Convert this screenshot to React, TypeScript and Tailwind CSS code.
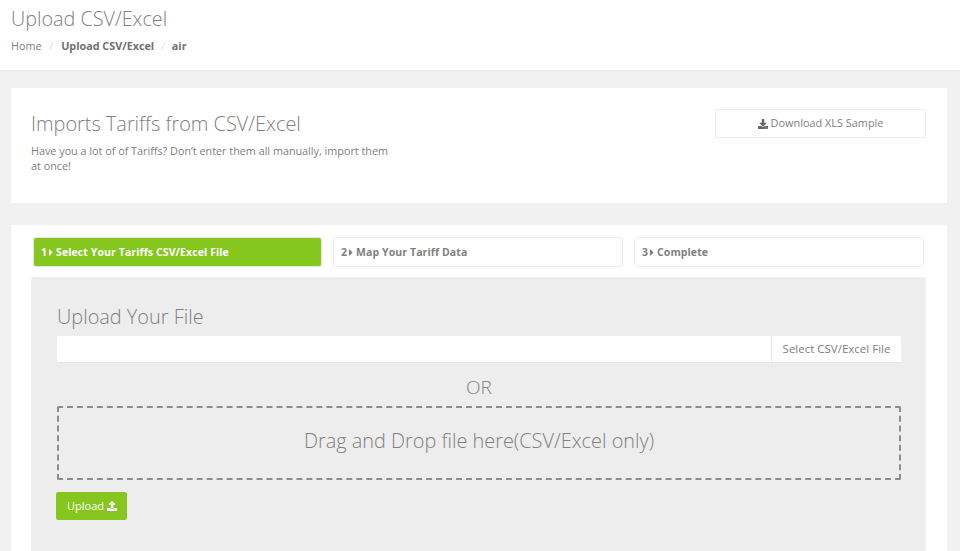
import React from 'react';
import { FaCaretRight, FaDownload, FaUpload } from 'react-icons/fa';

const steps = [
  { num: 1, label: 'Select Your Tariffs CSV/Excel File', active: true },
  { num: 2, label: 'Map Your Tariff Data', active: false },
  { num: 3, label: 'Complete', active: false },
];

const App = () => {
  return (
    <div className="h-screen overflow-hidden bg-[#f1f1f1] font-['Open_Sans',sans-serif] text-[#808080]">
      {/* Page header */}
      <header className="h-[71px] bg-white border-b border-[#ececec] pl-[11px] pt-[5px]">
        <h1 className="text-[19.8px] leading-[28px] font-light text-[#808080]">Upload CSV/Excel</h1>
        <nav className="mt-[5px] flex items-center text-[10.8px] leading-[16px]">
          <span className="text-[#808080]">Home</span>
          <span className="mx-[8px] font-light text-[#c4c4c4]">/</span>
          <span className="font-bold text-[#707070]">Upload CSV/Excel</span>
          <span className="mx-[7px] font-light text-[#c4c4c4]">/</span>
          <span className="font-bold text-[#707070]">air</span>
        </nav>
      </header>

      <main className="pl-[11px] pr-[13px] pt-[17px]">
        {/* Import intro */}
        <section className="h-[115px] bg-white flex justify-between pl-[20px] pr-[21px]">
          <div className="w-[365px] pt-[22px]">
            <h2 className="text-[19.9px] leading-[28px] font-light text-[#808080]">Imports Tariffs from CSV/Excel</h2>
            <p className="mt-[5px] text-[10.8px] leading-[15px] text-[#808080]">
              Have you a lot of of Tariffs? Don’t enter them all manually, import them at once!
            </p>
          </div>
          <button className="mt-[21px] w-[211px] h-[29px] flex items-center justify-center gap-[3px] bg-white border border-[#ececec] rounded-[2px] text-[10.9px] text-[#808080]">
            <FaDownload className="w-[10px] h-[10px] text-[#666]" />
            Download XLS Sample
          </button>
        </section>

        {/* Wizard */}
        <section className="mt-[22px] h-[400px] bg-white pl-[20px] pr-[21px] pt-[12px]">
          <div className="flex gap-[11px] px-[2px]">
            {steps.map((step) => (
              <div
                key={step.num}
                className={
                  step.active
                    ? 'flex-none w-[289px] h-[30px] flex items-center pl-[7px] pt-[1px] rounded-[3px] border border-[#e4e8e0] bg-[#85c71e] text-white text-[10.5px] font-bold'
                    : 'flex-1 h-[30px] flex items-center pl-[7px] pt-[1px] rounded-[3px] border border-[#ececec] bg-white text-[#808080] text-[10.5px] font-bold'
                }
              >
                {step.num}
                <FaCaretRight className="w-[8px] h-[11px]" />
                <span className="ml-[1px] tracking-[0.1px]">{step.label}</span>
              </div>
            ))}
          </div>

          <div className="mt-[10px] h-[300px] bg-[#ededed] rounded-[3px] pl-[26px] pr-[25px] pt-[26px]">
            <h3 className="text-[19.9px] leading-[28px] font-light text-[#808080]">Upload Your File</h3>
            <div className="mt-[5px] h-[27px] flex bg-white rounded-[2px] border-b border-[#e6e6e6]">
              <div className="flex-1" />
              <div className="w-[130px] flex items-center justify-center border-l border-[#e6e6e6] text-[11.5px] text-[#808080]">
                Select CSV/Excel File
              </div>
            </div>
            <div className="mt-[10px] text-center text-[19px] leading-[28px] font-light text-[#808080]">OR</div>
            <div className="mt-[5px] h-[74px] flex items-center justify-center pb-[5px] border-2 border-dashed border-[#8c8c8c] rounded-[2px] text-[19.9px] font-light text-[#808080]">
              Drag and Drop file here(CSV/Excel only)
            </div>
            <button className="mt-[12px] -ml-[1px] w-[71px] h-[28px] flex items-center justify-center gap-[3px] bg-[#85c71e] rounded-[2px] pl-[1px] text-[11px] text-white">
              Upload
              <FaUpload className="w-[10px] h-[10px]" />
            </button>
          </div>
        </section>
      </main>
    </div>
  );
};

export default App;
